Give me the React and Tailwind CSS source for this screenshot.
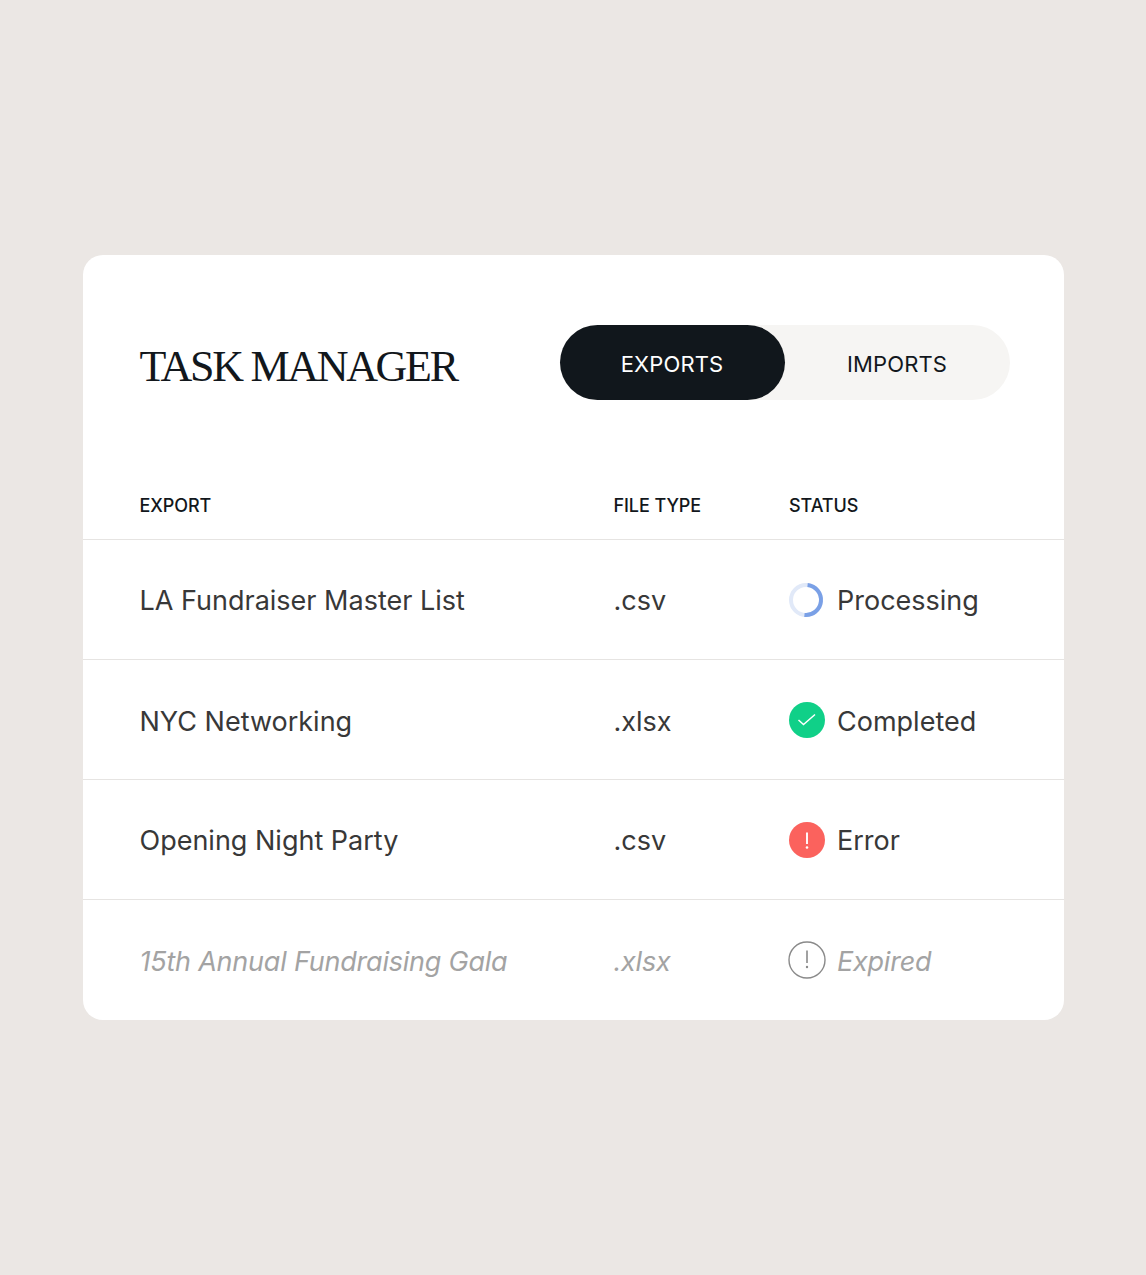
const inter = "font-['Inter',sans-serif]";

function Spinner() {
  return (
    <svg width="36" height="36" viewBox="0 0 36 36" fill="none" className="shrink-0">
      <circle cx="17" cy="18" r="15" stroke="#e1e9f8" strokeWidth="4" />
      <path d="M17 3A15 15 0 0 1 17 33" transform="rotate(6 17 18)" stroke="#7aa0e6" strokeWidth="4" />
    </svg>
  );
}
function Check() {
  return (
    <svg width="36" height="36" viewBox="0 0 36 36" fill="none" className="shrink-0">
      <circle cx="18" cy="18" r="18" fill="#10d088" />
      <path d="M9.5 18L14.5 22.5L26 12.5" stroke="#fff" strokeWidth="1.5" />
    </svg>
  );
}
function Err() {
  return (
    <svg width="36" height="36" viewBox="0 0 36 36" fill="none" className="shrink-0">
      <circle cx="18" cy="18" r="18" fill="#fb625d" />
      <path d="M18 10.5V22" stroke="#fff" strokeWidth="1.9" />
      <circle cx="18" cy="25.5" r="1.3" fill="#fff" />
    </svg>
  );
}
function Expired() {
  return (
    <svg width="38" height="38" viewBox="0 0 38 38" fill="none" className="shrink-0 -ml-px -mr-px">
      <circle cx="19" cy="19" r="18" stroke="#8a8a8a" strokeWidth="1.4" />
      <path d="M19 9.5V22" stroke="#8a8a8a" strokeWidth="1.6" />
      <circle cx="19" cy="26" r="1.2" fill="#8a8a8a" />
    </svg>
  );
}

const rows = [
  { name: "LA Fundraiser Master List", type: ".csv", status: "Processing", icon: <Spinner />, tp: "pt-[4px]" },
  { name: "NYC Networking", type: ".xlsx", status: "Completed", icon: <Check />, tp: "pt-[6px]" },
  { name: "Opening Night Party", type: ".csv", status: "Error", icon: <Err />, tp: "pt-[4px]" },
  { name: "15th Annual Fundraising Gala", type: ".xlsx", status: "Expired", icon: <Expired />, muted: true, tp: "pt-[6px]" },
];

export default function App() {
  return (
    <div className={`min-h-[1275px] bg-[#ebe7e4] flex items-center justify-center ${inter}`}>
      <div className="w-[981px] h-[765px] bg-white rounded-[20px] flex flex-col">
        <div className="h-[240px] pl-[57px] pr-[54px] pt-[70px] flex items-start justify-between">
          <h1 className="font-['Liberation_Serif',serif] text-[44px] leading-[75px] tracking-[-2.3px] text-[#12171c] mt-[4px]">
            TASK MANAGER
          </h1>
          <div className="w-[450px] h-[75px] rounded-full bg-[#f6f5f3] flex text-[22px] tracking-[0.15px]">
            <div className="w-[225px] pt-[3px] rounded-full bg-[#11171c] text-white flex items-center justify-center">EXPORTS</div>
            <div className="w-[225px] pt-[3px] text-[#12171c] flex items-center justify-center">IMPORTS</div>
          </div>
        </div>
        <div className="h-[44px] pl-[57px] flex text-[18px] leading-[20px] font-[450] tracking-[-0.08px] text-[#12171c] pt-[1px]">
          <div className="w-[474px]">EXPORT</div>
          <div className="w-[175.5px]">FILE TYPE</div>
          <div>STATUS</div>
        </div>
        <div className="flex flex-col">
          {rows.map((r) => (
            <div
              key={r.name}
              className={`h-[120px] border-t border-[#e6e4e2] pl-[57px] flex items-center text-[27px] ${r.muted ? "italic tracking-[-0.22px] text-[#a3a3a3]" : "tracking-[0px] text-[#383838]"}`}
            >
              <div className={`w-[474px] ${r.tp}`}>{r.name}</div>
              <div className={`w-[175.5px] ${r.tp}`}>{r.type}</div>
              <div className="flex items-center gap-3">
                {r.icon}
                <span className={r.tp}>{r.status}</span>
              </div>
            </div>
          ))}
        </div>
      </div>
    </div>
  );
}
